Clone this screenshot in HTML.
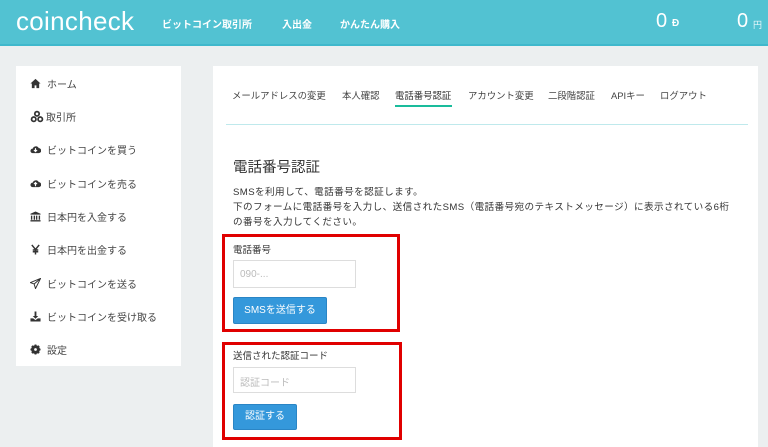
<!DOCTYPE html>
<html><head><meta charset="utf-8"><style>
*{margin:0;padding:0;box-sizing:border-box}
body{width:768px;height:447px;overflow:hidden;background:#eceff0;font-family:"Liberation Sans","Noto Sans CJK JP",sans-serif;color:#333;position:relative}
.hdr{position:absolute;left:0;top:0;width:768px;height:46px;background:#52c2d2;border-bottom:2px solid #3fb8cc}
.abs{position:absolute;white-space:nowrap}
.logo{left:16px;top:6px;font-size:26px;color:#fff;font-weight:300;letter-spacing:0.3px}
.nav{top:16px;font-size:10px;color:#fff;font-weight:bold}
.side{position:absolute;left:16px;top:66px;width:165px;height:300px;background:#fff}
.si{position:absolute;left:14px;font-size:10px;color:#444;white-space:nowrap;display:flex;align-items:center}
.si svg{width:11px;height:11px;margin-right:6px}
.main{position:absolute;left:213px;top:66px;width:545px;height:381px;background:#fff}
.tab{top:22px;font-size:9.4px;color:#444}
.red{position:absolute;border:3px solid #e00000}
.inp{position:absolute;border:1px solid #ddd;background:#fff;font-size:10px;color:#bbb;padding:8px 6px}
.btn{position:absolute;background:#3498db;border:1px solid #2a85c5;border-radius:2px;color:#fff;font-size:10px;text-align:center}
</style></head><body>
<div class="hdr"></div>
<div class="abs logo">coincheck</div>
<div class="abs nav" style="left:162px">ビットコイン取引所</div>
<div class="abs nav" style="left:282px">入出金</div>
<div class="abs nav" style="left:340px">かんたん購入</div>
<div class="abs" style="left:656px;top:10px;font-size:20px;color:#fff;font-weight:300">0</div>
<div class="abs" style="left:672px;top:18px;font-size:10px;color:#fff;font-weight:bold">Ð</div>
<div class="abs" style="left:737px;top:10px;font-size:20px;color:#fff;font-weight:300">0</div>
<div class="abs" style="left:753px;top:18px;font-size:9px;color:#e8f7fa">円</div>

<div class="side">
<div class="si" style="top:10px"><svg viewBox="0 0 12 12"><path d="M6 1L0.5 6H2v5h3V8h2v3h3V6h1.5z" fill="#333"/></svg>ホーム</div>
<div class="si" style="top:43px"><svg viewBox="0 0 12 12" style="width:14px;height:13px;margin-right:2px"><circle cx="6" cy="3.5" r="2.8" fill="#333"/><circle cx="3" cy="8.5" r="2.8" fill="#333"/><circle cx="9" cy="8.5" r="2.8" fill="#333"/><circle cx="6" cy="3.5" r="1.2" fill="#fff"/><circle cx="3" cy="8.5" r="1.2" fill="#fff"/><circle cx="9" cy="8.5" r="1.2" fill="#fff"/></svg>取引所</div>
<div class="si" style="top:76px"><svg viewBox="0 0 12 12"><path d="M3 10a2.5 2.5 0 010-5 3.5 3.5 0 016.5-0.5A2.7 2.7 0 019.5 10z" fill="#333"/><path d="M6 4.5v4M4.3 6.5L6 8.3 7.7 6.5" stroke="#fff" stroke-width="1.2" fill="none"/></svg>ビットコインを買う</div>
<div class="si" style="top:110px"><svg viewBox="0 0 12 12"><path d="M3 10a2.5 2.5 0 010-5 3.5 3.5 0 016.5-0.5A2.7 2.7 0 019.5 10z" fill="#333"/><path d="M6 9V5M4.3 6.7L6 5 7.7 6.7" stroke="#fff" stroke-width="1.2" fill="none"/></svg>ビットコインを売る</div>
<div class="si" style="top:143px"><svg viewBox="0 0 12 12"><path d="M6 0.5L0.5 3v1h11V3z M1 5h1.5v4.5H1zM4 5h1.5v4.5H4zM6.5 5H8v4.5H6.5zM9.5 5H11v4.5H9.5zM0.5 10h11v1.5H.5z" fill="#333"/></svg>日本円を入金する</div>
<div class="si" style="top:176px"><svg viewBox="0 0 12 12"><path d="M2 1l4 5 4-5M6 6v5.5M3 6.5h6M3 8.5h6" stroke="#333" stroke-width="1.6" fill="none"/></svg>日本円を出金する</div>
<div class="si" style="top:210px"><svg viewBox="0 0 12 12"><path d="M11.5 0.5L0.5 5l4 1.5 1.5 5z M4.5 6.5L11.5 0.5" stroke="#333" stroke-width="1.1" fill="none"/></svg>ビットコインを送る</div>
<div class="si" style="top:243px"><svg viewBox="0 0 12 12"><path d="M5 0.5h2v5h2L6 8.5 3 5.5h2z M0.5 8h3l2.5 2 2.5-2h3v3.5h-11z" fill="#333"/></svg>ビットコインを受け取る</div>
<div class="si" style="top:276px"><svg viewBox="0 0 12 12"><circle cx="6" cy="6" r="3.6" fill="none" stroke="#333" stroke-width="2.4"/><path d="M6 0.5v11M0.5 6h11M2.1 2.1l7.8 7.8M9.9 2.1l-7.8 7.8" stroke="#333" stroke-width="2"/><circle cx="6" cy="6" r="1.5" fill="#fff"/></svg>設定</div>
</div>

<div class="main">
<div class="abs tab" style="left:19px">メールアドレスの変更</div>
<div class="abs tab" style="left:129px">本人確認</div>
<div class="abs tab" style="left:182px;color:#333">電話番号認証</div>
<div style="position:absolute;left:182px;top:39px;width:57px;height:2px;background:#1abc9c"></div>
<div class="abs tab" style="left:255px">アカウント変更</div>
<div class="abs tab" style="left:335px">二段階認証</div>
<div class="abs tab" style="left:398px">APIキー</div>
<div class="abs tab" style="left:447px">ログアウト</div>
<div style="position:absolute;left:13px;top:58px;width:522px;height:1px;background:#bfe9ec"></div>
<div class="abs" style="left:20px;top:90px;font-size:14.5px;color:#333">電話番号認証</div>
<div class="abs" style="left:20px;top:119px;font-size:9.6px;line-height:15px;color:#333;letter-spacing:0.4px">SMSを利用して、電話番号を認証します。<br>下のフォームに電話番号を入力し、送信されたSMS（電話番号宛のテキストメッセージ）に表示されている6桁<br>の番号を入力してください。</div>
</div>

<div class="red" style="left:222px;top:234px;width:178px;height:98px"></div>
<div class="abs" style="left:233px;top:242px;font-size:9.5px">電話番号</div>
<div class="inp" style="left:233px;top:260px;width:123px;height:28px">090-...</div>
<div class="btn" style="left:233px;top:297px;width:94px;height:27px;line-height:25px">SMSを送信する</div>

<div class="red" style="left:222px;top:342px;width:180px;height:98px"></div>
<div class="abs" style="left:233px;top:348px;font-size:9.5px">送信された認証コード</div>
<div class="inp" style="left:233px;top:367px;width:123px;height:26px;padding:6px">認証コード</div>
<div class="btn" style="left:233px;top:404px;width:64px;height:26px;line-height:24px">認証する</div>
</body></html>
